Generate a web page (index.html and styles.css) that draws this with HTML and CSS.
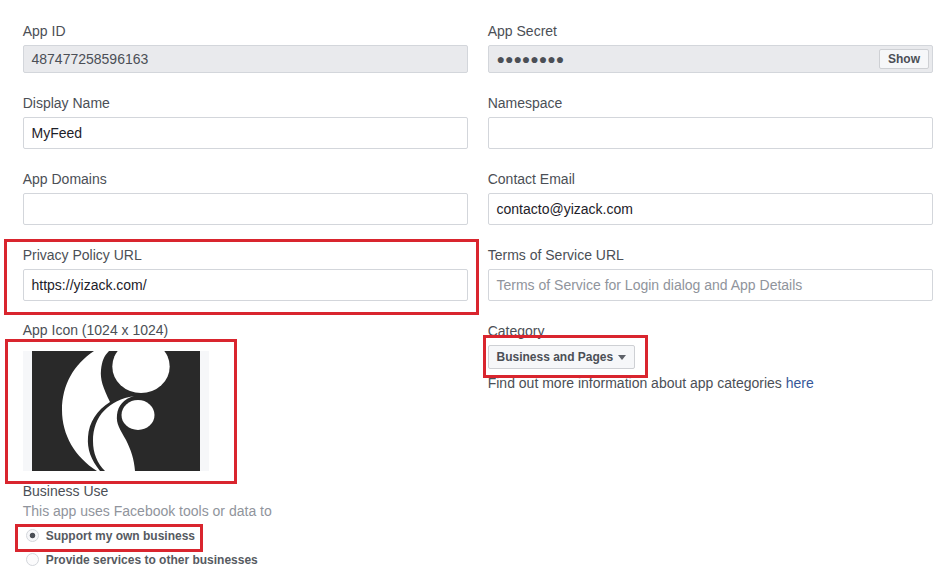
FILE: index.html
```html
<!DOCTYPE html>
<html lang="en">
<head>
<meta charset="utf-8">
<title>App Settings</title>
<link rel="stylesheet" href="styles.css">
</head>
<body>
<main class="settings">
  <section class="field field-short">
    <div class="label">App ID</div>
    <div class="input disabled">487477258596163</div>
  </section>
  <section class="field field-short">
    <div class="label">App Secret</div>
    <div class="input disabled secret"><span>●●●●●●●●</span><button class="show">Show</button></div>
  </section>
  <section class="field">
    <div class="label">Display Name</div>
    <div class="input">MyFeed</div>
  </section>
  <section class="field">
    <div class="label">Namespace</div>
    <div class="input"></div>
  </section>
  <section class="field">
    <div class="label">App Domains</div>
    <div class="input"></div>
  </section>
  <section class="field">
    <div class="label">Contact Email</div>
    <div class="input">contacto@yizack.com</div>
  </section>
  <section class="field">
    <div class="label">Privacy Policy URL</div>
    <div class="input">https://yizack.com/</div>
    <div class="mark mark-privacy"></div>
  </section>
  <section class="field">
    <div class="label">Terms of Service URL</div>
    <div class="input placeholder">Terms of Service for Login dialog and App Details</div>
  </section>
  <section class="field icon-field">
    <div class="label">App Icon (1024 x 1024)</div>
    <div class="icon-frame">
      <svg width="168" height="120" viewBox="0 0 168 120">
        <rect width="168" height="120" fill="#292929"/>
        <path fill="#fff" d="M62 0C42 13 30 34 30 59C30 84 43 106 65 120H68C59 109 55 98 56 86C57 71 65 59 78 51C71 37 68 28 69 19C70 10 72 5 77 0Z"/>
        <path fill="#fff" d="M102 45C77 49 61 65 61 90C61 102 65 112 73 120H103C102 108 99 99 94 89C88 78 84 73 85 64C86 54 92 48 102 45Z"/>
        <ellipse cx="109" cy="15.5" rx="28.7" ry="26.5" fill="#fff"/>
        <ellipse cx="106" cy="64" rx="16.5" ry="15" fill="#fff"/>
      </svg>
    </div>
    <div class="mark mark-icon"></div>
  </section>
  <section class="field category-field">
    <div class="label">Category</div>
    <button class="select">Business and Pages<span class="caret"></span></button>
    <div class="hint">Find out more information about app categories <a>here</a></div>
    <div class="mark mark-category"></div>
  </section>
  <section class="field business">
    <div class="label">Business Use</div>
    <div class="note">This app uses Facebook tools or data to</div>
    <div class="option"><span class="radio on"></span><span>Support my own business</span></div>
    <div class="option"><span class="radio"></span><span>Provide services to other businesses</span></div>
    <div class="mark mark-business"></div>
  </section>
</main>
</body>
</html>
```
FILE: styles.css
```css
* { box-sizing: border-box; }
body {
  margin: 0;
  background: #fff;
  color: #4b4f56;
  font-family: "Liberation Sans", Arial, sans-serif;
  font-size: 14px;
  overflow: hidden;
}
.settings {
  display: grid;
  grid-template-columns: 445px 445px;
  column-gap: 20px;
  padding: 21px 15px 0 23px;
  height: 570px;
  align-content: start;
}
.field { position: relative; height: 76px; }
.field-short { height: 72px; }
.label { line-height: 20px; margin-bottom: 4px; }
.label, .hint, .note { text-indent: -0.3px; }
.input {
  display: flex;
  align-items: center;
  height: 32px;
  padding: 0 7.5px;
  border: 1px solid #d3d6db;
  border-radius: 2px;
  color: #1d2129;
}
.input.disabled { height: 28px; background: #e9eaed; color: #4b4f56; }
.input.placeholder { color: #90949c; }
.input.secret { justify-content: space-between; padding-right: 3px; }
button {
  font: bold 12px "Liberation Sans", Arial, sans-serif;
  color: #4b4f56;
  background: #f6f7f9;
  border: 1px solid #ced0d4;
  border-radius: 2px;
  padding: 0 8px;
}
.show { width: 50px; height: 20px; }
.icon-field { height: 161px; margin-top: -1px; }
.icon-frame {
  display: flex;
  justify-content: center;
  width: 186px;
  height: 120px;
  margin-top: 11px;
  background: #f6f7f9;
}
.select { display: flex; align-items: center; justify-content: space-between; width: 147px; height: 24px; padding: 0 8px 0 7.5px; }
.caret { border: 4.5px solid transparent; border-top: 5px solid #5d6168; border-bottom: 0; }
.hint { line-height: 20px; margin-top: 4px; }
.hint a { color: #365899; }
.business { height: 90px; }
.business .label { margin-bottom: 0; }
.note { line-height: 20px; color: #90949c; margin-bottom: 3px; }
.option { display: flex; align-items: center; gap: 7px; height: 24px; padding-left: 2.7px; font-size: 12px; font-weight: bold; color: #565a61; }
.radio {
  width: 13px;
  height: 13px;
  margin-bottom: 1px;
  border: 1px solid #d3d6db;
  border-radius: 50%;
  background: #fbfbfc;
}
.radio.on { background: radial-gradient(circle, #4b4f56 2.3px, #f6f7f9 3.2px); }
.mark { position: absolute; border: 3px solid #d9252e; }
.mark-privacy { left: -19px; top: -6px; width: 475px; height: 76px; }
.mark-icon { left: -18px; top: 19px; width: 232px; height: 145px; z-index: 1; }
.mark-category { left: -5px; top: 14px; width: 165px; height: 43px; }
.mark-business { left: -8px; top: 43px; width: 188px; height: 28px; }
```
